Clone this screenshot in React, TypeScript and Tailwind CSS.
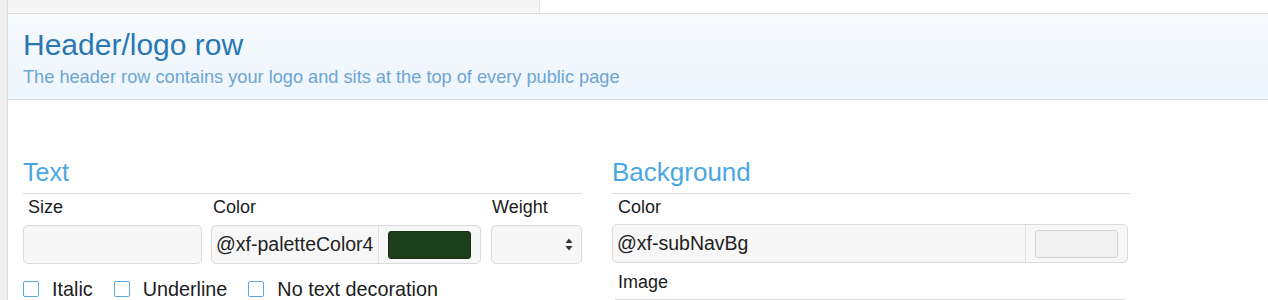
import React from "react";

const font = { fontFamily: '"Liberation Sans", Arial, Helvetica, sans-serif' };

function Checkbox({ label }: { label: string }) {
  return (
    <label className="flex items-center gap-[13px]">
      <span className="h-[16px] w-[16px] rounded-[2px] border border-[#5aa9df] bg-white" />
      <span className="text-[19.8px] leading-[22px] text-[#1c1c1c]">{label}</span>
    </label>
  );
}

function ColorInput({ value, swatch, border }: { value: string; swatch: string; border: string }) {
  return (
    <div className="flex h-[39px] w-full items-stretch rounded-[5px] border border-[#dadada] bg-[#f7f7f7]">
      <div className="flex flex-1 items-center pl-[4px] text-[19.5px] text-[#222]">{value}</div>
      <div className="flex items-center border-l border-[#e2e2e2] px-[9px]">
        <div className={`h-[28px] w-[83px] rounded-[3px] border ${border} ${swatch}`} />
      </div>
    </div>
  );
}

export default function App() {
  return (
    <div className="flex h-[300px] w-[1268px] overflow-hidden bg-white" style={font}>
      <div className="w-[8px] shrink-0 border-r border-[#dcdcdc] bg-[#efefef]" />
      <div className="flex-1">
        <div className="flex h-[14px] border-b border-[#dedede]">
          <div className="w-[532px] border-r border-[#e4e4e4] bg-[#f5f5f5]" />
          <div className="flex-1 bg-white" />
        </div>
        <div className="h-[86px] border-b border-[#d7dde3] bg-gradient-to-b from-[#f7fafd] to-[#edf5fc] px-[15px] pt-[13px]">
          <h1 className="text-[30px] leading-[36px] text-[#2a78b3]">Header/logo row</h1>
          <p className="mt-[3px] text-[18.2px] leading-[22px] text-[#6da5d3]">
            The header row contains your logo and sits at the top of every public page
          </p>
        </div>
        <div className="flex gap-[30px] pl-[15px] pt-[57px]">
          <section className="w-[559px]">
            <h2 className="border-b border-[#dcdcdc] pb-[6px] text-[25px] leading-[30px] text-[#4ba7e2]">Text</h2>
            <div className="flex gap-[9px]">
              <div className="w-[179px]">
                <div className="pl-[5px] pt-[1px] text-[18px] leading-[24px] text-[#1c1c1c]">Size</div>
                <div className="mt-[6px] h-[39px] rounded-[5px] border border-[#dadada] bg-[#f7f7f7]" />
              </div>
              <div className="w-[270px]">
                <div className="pl-[2px] pt-[1px] text-[18px] leading-[24px] text-[#1c1c1c]">Color</div>
                <div className="mt-[6px]">
                  <ColorInput value="@xf-paletteColor4" swatch="bg-[#1d3e1c]" border="border-[#163015]" />
                </div>
              </div>
              <div className="ml-[1px] w-[91px]">
                <div className="pl-[1px] pt-[1px] text-[18px] leading-[24px] text-[#1c1c1c]">Weight</div>
                <div className="mt-[6px] flex h-[39px] items-center justify-end rounded-[5px] border border-[#dadada] bg-[#f7f7f7] pr-[8px]">
                  <svg width="8" height="13" viewBox="0 0 8 13">
                    <path d="M4 0.5 L7.5 5 L0.5 5 Z" fill="#333" />
                    <path d="M4 12.5 L7.5 8 L0.5 8 Z" fill="#333" />
                  </svg>
                </div>
              </div>
            </div>
            <div className="mt-[14px] flex gap-[21px]">
              <Checkbox label="Italic" />
              <Checkbox label="Underline" />
              <Checkbox label="No text decoration" />
            </div>
          </section>
          <section className="w-[518px]">
            <h2 className="border-b border-[#dcdcdc] pb-[6px] text-[26px] leading-[30px] text-[#4ba7e2]">Background</h2>
            <div className="pl-[6px] pt-[1px] text-[18px] leading-[24px] text-[#1c1c1c]">Color</div>
            <div className="mt-[5px] w-[516px]">
              <ColorInput value="@xf-subNavBg" swatch="bg-[#f2f2f2]" border="border-[#d4d4d4]" />
            </div>
            <div className="pl-[6px] pt-[7px] text-[18px] leading-[24px] text-[#1c1c1c]">Image</div>
            <div className="mt-[5px] h-[39px] w-[516px] rounded-[5px] border border-[#dadada] bg-[#f7f7f7]" />
          </section>
        </div>
      </div>
    </div>
  );
}
